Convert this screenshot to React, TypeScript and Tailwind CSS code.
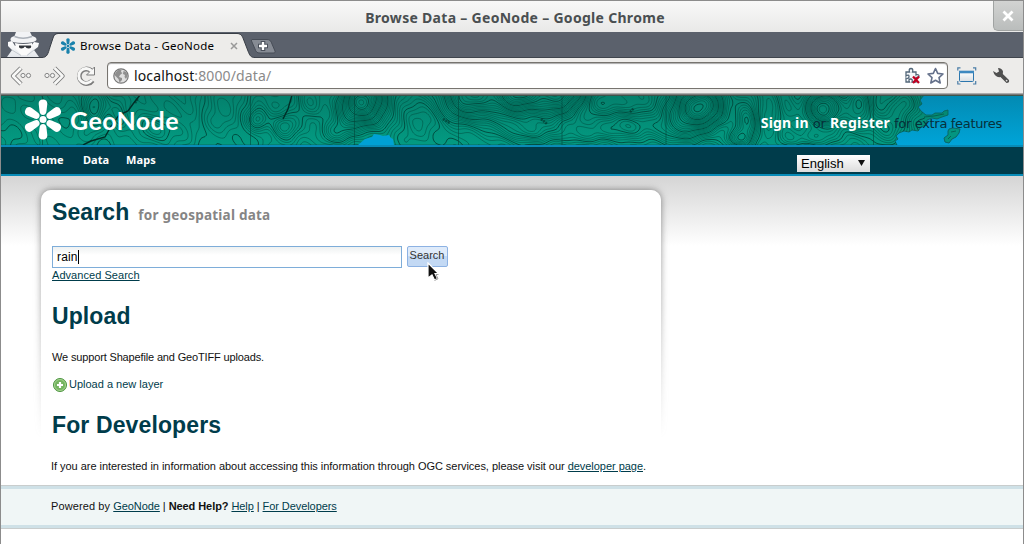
import React from "react";

const MAP_W = 1022;
const MAP_H = 50;

// Hills of the relief map: x, y, radius x, radius y, height
const HILLS: number[][] = [
  [93, 8, 13, 26, 5], [118, 24, 9, 22, 2.5], [60, 4, 30, 14, 1.2], [155, 36, 20, 14, 3],
  [186, 6, 18, 22, 2.4], [222, 12, 22, 20, -2.5], [257, 24, 10, 12, 3.4], [284, 30, 14, 14, 3.8],
  [309, 6, 16, 20, 4], [361, 6, 26, 26, 12], [335, 36, 18, 14, 3.5], [420, 30, 26, 24, -2],
  [470, -4, 34, 30, 11], [515, -4, 20, 28, 8], [548, 0, 34, 32, 11], [572, -4, 24, 16, 4],
  [600, 8, 22, 12, -2.5], [625, 30, 24, 16, 4.5], [590, 38, 30, 12, 3], [520, 38, 26, 10, 2.6],
  [698, 10, 28, 28, 14], [670, 30, 22, 20, 4], [746, 26, 12, 28, 5.6], [735, 44, 14, 9, 4],
  [823, 14, 20, 22, 10], [785, 10, 12, 30, 4], [858, 10, 14, 26, 5.7], [885, 30, 20, 20, 4],
  [810, 44, 30, 10, 3], [902, 8, 14, 14, 3.6],
];

function elevation(x: number, y: number): number {
  let v = 0.5 * Math.sin(x / 19 + Math.sin(y / 9) * 1.3) + 0.3 * Math.sin(x / 8 + y / 11) + 0.22 * Math.cos(x / 4 - y / 5);
  for (const [hx, hy, rx, ry, h] of HILLS) {
    const dx = (x - hx) / rx;
    const dy = (y - hy) / ry;
    v += h * Math.exp(-(dx * dx + dy * dy));
  }
  return v;
}

function contour(level: number): string {
  const s = 2;
  const out: string[] = [];
  for (let y = 0; y < MAP_H; y += s) {
    for (let x = 0; x < 924; x += s) {
      const a = elevation(x, y) - level;
      const b = elevation(x + s, y) - level;
      const c = elevation(x + s, y + s) - level;
      const d = elevation(x, y + s) - level;
      const p: string[] = [];
      if (a * b < 0) p.push(`${(x + (s * a) / (a - b)).toFixed(1)} ${y}`);
      if (b * c < 0) p.push(`${x + s} ${(y + (s * b) / (b - c)).toFixed(1)}`);
      if (c * d < 0) p.push(`${(x + (s * d) / (d - c)).toFixed(1)} ${y + s}`);
      if (a * d < 0) p.push(`${x} ${(y + (s * a) / (a - d)).toFixed(1)}`);
      if (p.length >= 2) out.push(`M${p[0]}L${p[1]}`);
      if (p.length === 4) out.push(`M${p[2]}L${p[3]}`);
    }
  }
  return out.join("");
}

const CONTOURS = Array.from({ length: 44 }, (_, i) => contour(-2.2 + i * 0.48));

const LAND =
  "M0 0H923L919 5L921 9L917 12L920 16L925 20L931 20L934 18L941 18L943 16L947 15L947 20L941 22L936 24L931 23L926 25L925 30L920 32L917 36L911 35L908 37L903 36L898 38L895 41L897 44L894 46L896 50H0Z";

function ReliefMap() {
  return (
    <svg className="absolute inset-0 h-[50px] w-[1022px]" viewBox={`0 0 ${MAP_W} ${MAP_H}`} aria-hidden="true">
      <defs>
        <linearGradient id="sea" x1="0" y1="0" x2="0" y2="1">
          <stop offset="0" stopColor="#028ab2" />
          <stop offset="1" stopColor="#00a4d8" />
        </linearGradient>
        <linearGradient id="land" x1="0" y1="0" x2="0" y2="1">
          <stop offset="0" stopColor="#04806c" />
          <stop offset="1" stopColor="#039b82" />
        </linearGradient>
        <clipPath id="landClip">
          <path d={LAND} />
        </clipPath>
      </defs>
      <rect width="1022" height="50" fill="url(#sea)" />
      <path d={LAND} fill="url(#land)" stroke="#0b5f58" strokeWidth=".8" />
      <g clipPath="url(#landClip)" fill="none" stroke="#02483c">
        {CONTOURS.map((d, i) => (
          <path key={i} d={d} strokeWidth={i % 5 === 4 ? 1 : 0.7} opacity={i % 5 === 4 ? 0.9 : 0.68} />
        ))}
        <path d="M41.500 0V50M249.500 0V50M353.500 0V50M457.500 0V50M561 0V50M665 0V50M872.500 0V50" opacity=".6" />
        <path d="M139 0L132 9L127 16L118 20L109 33L104 42L90 46L82 50M291 0L287 14L282 24" stroke="#012e27" strokeWidth="1.400" />
        <path d="M442 24L449 28M540 24L546 29M629 17L633 13M134 8L137 3" stroke="#012e27" strokeWidth="2.600" strokeDasharray="2 .8" opacity=".6" />
      </g>
      <path d="M357 50L364 44L371 42L373 39L379 40L382 41L388 40L390 43L392 44L393 50Z" fill="#00a1d4" />
      <path d="M948 34L952 33L959 34L958 38L955 42L951 44L948 48L944 47L943 43L947 40L947 36Z" fill="#039580" stroke="#0b6666" />
      <path d="M923 22L933 21L943 19M950 37L955 36M950 41L947 44" fill="none" stroke="#02584c" strokeWidth=".8" />
      <rect width="1022" height="1" fill="#3d554b" />
    </svg>
  );
}

function Petals({ className, color }: { className: string; color: string }) {
  return (
    <svg className={className} viewBox="0 0 38 41" fill={color} aria-hidden="true">
      {[0, 60, 120, 180, 240, 300].map((a) => (
        <path
          key={a}
          transform={`rotate(${a} 19 20.500)`}
          d="M19 .4C21.900 .4 23.600 2.200 23.300 5L22.500 12C22.200 14.900 21 16 19 16C17 16 15.800 14.900 15.500 12L14.700 5C14.400 2.200 16.100 .4 19 .4Z"
        />
      ))}
      <circle cx="19" cy="20.500" r="3.500" />
    </svg>
  );
}

function TabStrip() {
  return (
    <div className="relative h-[26px] bg-[#5b616c]">
      <svg className="absolute inset-0 h-[26px] w-[290px]" viewBox="0 0 290 26" aria-hidden="true">
        <defs>
          <linearGradient id="coat" x1="0" y1="0" x2="0" y2="1">
            <stop offset="0" stopColor="#ffffff" />
            <stop offset="1" stopColor="#e3e6ea" />
          </linearGradient>
        </defs>
        <path d="M11 9L7 10L7 14L11 18L6 25H38L33 18L37 15L38 11L33 10L30 14H14Z" fill="url(#coat)" />
        <path d="M15 0H29L31 4Q36 5 35.500 8Q34 11 22 11Q10 11 9.500 8Q9 5 13.500 4Z" fill="#f2f3f5" />
        <path d="M13.500 4.500Q22 8 31 4.500" fill="none" stroke="#aab0b8" strokeWidth="1.600" />
        <path d="M14 11Q22 13 31 11L31 17L26 23H20L15 17Z" fill="#fafafa" />
        <path d="M18 13.500H30Q31 16.500 27.500 16.500Q25 16.500 24.500 14.800H23.500Q23 16.500 20.500 16.500Q17.500 16.500 18 13.500Z" fill="#30343a" />
        <path d="M11 18L20 23.500M33 18L26 23.500" fill="none" stroke="#c5cad0" />
        <path d="M0 25.500H41C46 25.500 47 22 49 15L52 6C53 3 54 2 57 2H236C240 2 241 4 242 6L247 19C249 24 250 25.500 254 25.500H290V26H0Z" fill="#edecea" />
        <path d="M0 25.500H41C46 25.500 47 22 49 15L52 6C53 3 54 1.500 57 1.500H236C240 1.500 241 4 242 6L247 19C249 24 250 25.500 254 25.500H290" fill="none" stroke="#393e46" />
        <path d="M251 7.500H266C269 7.500 270 9 271 12L274 19C274.500 20.500 274 21 272 21H259C256 21 255 20 254 17L250.500 9Q250 7.500 251 7.500Z" fill="#868b94" stroke="#474d57" />
        <path d="M262 9V19M257 14H267" stroke="#4a505b" strokeWidth="4.600" />
        <path d="M262 10V18M258 14H266" stroke="#fff" strokeWidth="2.400" />
        <path d="M230 11L236 17M236 11L230 17" stroke="#999" strokeWidth="1.500" />
      </svg>
      <div className="relative flex h-[26px] items-center pl-[59px]">
        <Petals className="mt-[2px] h-[16px] w-[16px]" color="#1a82ac" />
        <span className="ml-[4px] pt-[2px] text-[11.500px] leading-[26px] tracking-[0.250px] whitespace-nowrap text-black [font-family:'Noto_Sans',sans-serif]">
          Browse Data - GeoNode
        </span>
      </div>
      <div className="absolute right-0 bottom-0 left-[254px] h-px bg-[#40454d]" />
    </div>
  );
}

function BackForward() {
  return (
    <svg className="h-[24px] w-[60px] shrink-0" viewBox="0 0 60 24" fill="none" aria-hidden="true">
      <g strokeLinejoin="round">
        {["M12 4L4 12L12 20", "M45.500 4L53.500 12L45.500 20"].map((d) => (
          <React.Fragment key={d}>
            <path d={d} stroke="#777" strokeWidth="4.400" />
            <path d={d} stroke="#f8f8f7" strokeWidth="2.600" />
          </React.Fragment>
        ))}
      </g>
      <g stroke="#858585" fill="#f4f4f3">
        <circle cx="14" cy="11.500" r="2.100" />
        <circle cx="19.500" cy="11.500" r="2.100" />
        <circle cx="38" cy="11.500" r="2.100" />
        <circle cx="43.500" cy="11.500" r="2.100" />
      </g>
    </svg>
  );
}

function Reload() {
  return (
    <svg className="ml-[6px] h-[22px] w-[22px] shrink-0" viewBox="0 0 22 22" fill="none" aria-hidden="true">
      <path d="M17.500 15.500A7.300 7.300 0 1 1 16 5.500" stroke="#7b7b7b" strokeWidth="4.800" />
      <path d="M19.500 2V10H11.500Z" fill="#f8f8f7" stroke="#7b7b7b" />
      <path d="M17 15A7.300 7.300 0 1 1 16.500 6" stroke="#f8f8f7" strokeWidth="3" />
    </svg>
  );
}

function Globe() {
  return (
    <svg className="h-[16px] w-[16px] shrink-0" viewBox="0 0 16 16" aria-hidden="true">
      <circle cx="8" cy="8" r="7.200" fill="#dedede" stroke="#777" strokeWidth="1.200" />
      <path d="M3 4L6 1.500L8.500 2L8 4L9.500 5L7 7L6 9L9 10L9 12L6.500 14.500L5.500 11L3 8.500L1.500 7ZM10.500 3L13.500 4L14.500 8L13 11L11.500 9L12 7L10 6Z" fill="#8f8f8f" />
    </svg>
  );
}

function Toolbar() {
  return (
    <div className="flex h-[35px] items-center bg-[#edecea] pl-[8px]">
      <BackForward />
      <Reload />
      <div className="ml-[10px] flex h-[27px] w-[841px] shrink-0 items-center rounded-[4px] border border-[#77746f] bg-white pl-[5px] shadow-[inset_0_1px_1px_#aaa]">
        <Globe />
        <span className="ml-[5px] pt-px text-[14px] leading-[24px] tracking-[0.130px] text-[#111] [font-family:'Noto_Sans',sans-serif]">
          localhost<span className="text-[#8a8a8a]">:8000/data/</span>
        </span>
        <div className="grow" />
        <svg className="h-[18px] w-[18px]" viewBox="0 0 18 18" aria-hidden="true">
          <path d="M2 5H5.500Q4.500 1.500 7 1.500T8.500 5H12V8Q15 7 15 9T12 10.500V15H8Q9 12 6.500 12T5.500 15H2V11Q5 12 5 9.500T2 9Z" fill="#f3f6f9" stroke="#536779" strokeWidth="1.300" />
          <path d="M9 9.500L15 16M15 9.500L9 16" stroke="#c00021" strokeWidth="2.300" />
        </svg>
        <svg className="mr-[2px] ml-[4px] h-[18px] w-[19px]" viewBox="0 0 18 18" aria-hidden="true">
          <path d="M9 1.500L11.200 6.400L16.500 7L12.500 10.600L13.700 16L9 13.200L4.300 16L5.500 10.600L1.500 7L6.800 6.400Z" fill="#fff" stroke="#64708a" strokeWidth="1.600" strokeLinejoin="round" />
        </svg>
      </div>
      <svg className="ml-[9px] h-[18px] w-[20px]" viewBox="0 0 20 18" aria-hidden="true">
        <defs>
          <linearGradient id="win" x1="0" y1="0" x2="0" y2="1">
            <stop offset="0" stopColor="#fff" />
            <stop offset="1" stopColor="#d8dee3" />
          </linearGradient>
        </defs>
        <rect x="2.500" y="4.500" width="14" height="10" rx="1" fill="url(#win)" stroke="#2c76ad" />
        <path d="M2 5H17" stroke="#3c88c0" strokeWidth="2.600" />
        <path d="M.8 3.500L.8 .8H3.500M16 .8H18.700V3.500M.8 14V17H3.500M16 17H18.700V14" fill="none" stroke="#4a7da7" strokeWidth="1.200" />
      </svg>
      <svg className="ml-[15px] h-[18px] w-[18px]" viewBox="0 0 18 18" aria-hidden="true">
        <path d="M1 4L4.500 6L7 4.500L6 1Q10 1 11 4.500L10.800 7L17 13Q17.800 16 14.500 16L8.500 10Q3 11 1 4Z" fill="#505050" />
        <circle cx="14.600" cy="13.600" r=".9" fill="#ddd" />
      </svg>
    </div>
  );
}

function SiteHeader() {
  return (
    <header>
      <div className="relative h-[50px]">
        <ReliefMap />
        <div className="relative flex h-[50px] items-start">
          <Petals className="mt-[4px] ml-[23px] h-[41px] w-[38px]" color="#fff" />
          <span className="mt-[7.500px] ml-[8px] w-[120px] text-[25px] leading-[34px] font-bold tracking-[0.400px] text-white [font-family:Lato,sans-serif]">
            GeoNode
          </span>
          <div className="mt-[16px] ml-auto flex h-[24px] items-baseline pr-[21px] whitespace-nowrap text-[#06303a]">
            <b className="text-[14px] leading-[24px] tracking-[0.150px] text-white [font-family:'Noto_Sans',sans-serif]">Sign in</b>
            <span className="ml-[4px] text-[13px] leading-[24px] [font-family:'DejaVu_Sans',sans-serif]">or</span>
            <b className="ml-[4px] text-[14px] leading-[24px] tracking-[0.220px] text-white [font-family:'Noto_Sans',sans-serif]">Register</b>
            <span className="ml-[4px] text-[13px] leading-[24px] tracking-[-0.320px] [font-family:'DejaVu_Sans',sans-serif]">for extra features</span>
          </div>
        </div>
      </div>
      <nav className="flex h-[31px] border-y-2 border-[#088cb8] bg-[#003c4b] pl-[30px] text-[11px] leading-[26px] font-bold text-white [font-family:'Noto_Sans',sans-serif]">
        <a className="w-[52px]">Home</a>
        <a className="w-[43px]">Data</a>
        <a className="tracking-[0.150px]">Maps</a>
        <div className="mt-[8px] mr-[153px] ml-auto flex h-[17px] w-[73px] items-center justify-between bg-gradient-to-b from-white to-[#dcdcdc] pr-[5px] pl-[4px] text-[13px] leading-[17px] font-normal text-black [font-family:'Liberation_Sans',sans-serif]">
          <span>English</span>
          <svg className="mb-[2px] h-[6px] w-[7px]" viewBox="0 0 7 6" aria-hidden="true">
            <path d="M0 0H7L3.500 6Z" fill="#111" />
          </svg>
        </div>
      </nav>
    </header>
  );
}

function Link({ children }: { children: React.ReactNode }) {
  return <a className="text-[#003c4b] underline">{children}</a>;
}

function Content() {
  return (
    <main className="relative h-[309px] bg-gradient-to-b from-[#d5d5d5] to-white bg-[length:100%_70px] bg-no-repeat pt-[14px] pl-[40px]">
      <div className="absolute top-0 left-[30px] h-[262px] w-[640px] overflow-hidden px-[10px] pt-[14px] [mask-image:linear-gradient(#000,#0009_50%,transparent)]">
        <div className="h-[300px] w-[620px] rounded-t-[10px] shadow-[0_0_7px_#777]" />
      </div>
      <section className="relative h-[295px] w-[620px] rounded-t-[10px] bg-white pt-[8px] pl-[11px]">
        <div className="flex h-[28px] items-baseline">
          <h1 className="text-[23px] leading-[28px] font-bold tracking-[0.100px] text-[#003c4b]">Search</h1>
          <span className="ml-[9px] text-[13.500px] leading-[28px] font-bold tracking-[0.230px] text-[#858585] [font-family:'Noto_Sans',sans-serif]">for geospatial data</span>
        </div>
        <div className="mt-[20px] flex h-[22px]">
          <div className="flex h-[22px] w-[350px] items-center border border-[#7eadd9] bg-gradient-to-b from-[#eef1f1] to-white to-40% pl-[4px] text-[12px] tracking-[0.150px] text-black">
            rain
            <i className="h-[14px] w-px bg-black" />
          </div>
          <button className="ml-[5px] h-[21px] w-[41px] rounded-[2px] border border-[#8db2e3] bg-gradient-to-b from-[#dfebfa] from-45% to-[#c3d9f4] to-50% pr-px pb-[2px] text-[11px] leading-[17px] text-[#333]">
            Search
          </button>
        </div>
        <p className="h-[14px] tracking-[0.050px]"><Link>Advanced Search</Link></p>
        <h1 className="mt-[20px] text-[23px] leading-[28px] font-bold tracking-[0.100px] text-[#003c4b]">Upload</h1>
        <p className="mt-[20px] tracking-[-0.150px]">We support Shapefile and GeoTIFF uploads.</p>
        <div className="mt-[13px] flex h-[14px] items-center text-[#003c4b]">
          <svg className="mt-[2px] ml-[1px] h-[14px] w-[14px]" viewBox="0 0 14 14" aria-hidden="true">
            <circle cx="7" cy="7" r="6.500" fill="#74b45f" stroke="#4c9440" />
            <circle cx="7" cy="7" r="5.500" fill="none" stroke="#a5d391" />
            <path d="M7 4V10M4 7H10" stroke="#fff" strokeWidth="2.200" />
          </svg>
          <a className="ml-[2px]">Upload a new layer</a>
        </div>
        <h1 className="mt-[20px] text-[23px] leading-[28px] font-bold tracking-[0.120px] text-[#003c4b]">For Developers</h1>
        <p className="mt-[20px] -ml-px tracking-[-0.039px] whitespace-nowrap">
          If you are interested in information about accessing this information through OGC services, please visit our <Link>developer page</Link>.
        </p>
      </section>
      <svg className="absolute top-[86px] left-[425px] h-[20px] w-[16px]" viewBox="0 0 16 20" aria-hidden="true">
        <path d="M2 1L12.500 11.500H9L11.500 16.500L8.500 18L6 13L2 16Z" fill="#111" stroke="#fff" strokeWidth="1.200" />
        <path d="M12.500 12.500H10L12 16.800L8.500 18.500" fill="none" stroke="#888" strokeWidth=".8" />
      </svg>
    </main>
  );
}

export default function App() {
  return (
    <div className="h-[544px] w-[1024px] overflow-hidden border-x border-t border-[#8c8c8c] bg-white text-[11px] leading-[14px] text-[#111] [font-family:'Liberation_Sans',sans-serif]">
      <div className="flex h-[31px] bg-gradient-to-b from-[#f8f8f8] to-[#e9e9e8]">
        <div className="w-[30px]" />
        <h2 className="grow pt-[6px] pl-[6px] text-center text-[14px] leading-[22px] font-bold tracking-[0.300px] text-[#4a4f51] [font-family:'Noto_Sans',sans-serif]">
          Browse Data – GeoNode – Google Chrome
        </h2>
        <div className="flex h-[30px] w-[30px] items-center justify-center rounded-bl-[5px] border-b border-l border-[#a0a3a2] bg-gradient-to-b from-[#d2d3d2] to-[#babdbc]">
          <svg className="mr-[2px] h-[12px] w-[12px]" viewBox="0 0 12 12" aria-hidden="true">
            <path d="M1.500 1.500L10.500 10.500M10.500 1.500L1.500 10.500" stroke="#fff" strokeWidth="2.800" />
          </svg>
        </div>
      </div>
      <TabStrip />
      <Toolbar />
      <div className="h-[2px] border-t border-[#aaa] bg-[#777]" />
      <SiteHeader />
      <Content />
      <footer className="h-[44px] border-y border-[#c9cdcd] bg-[#f0f6f6]">
        <div className="h-[42px] border-y-[3px] border-[#cfe1e7] pt-[10px] pl-[50px] tracking-[-0.070px]">
          <span className="tracking-[0.100px]">Powered by </span><Link>GeoNode</Link> | <b>Need Help?</b> <Link>Help</Link> | <Link>For Developers</Link>
        </div>
      </footer>
    </div>
  );
}
